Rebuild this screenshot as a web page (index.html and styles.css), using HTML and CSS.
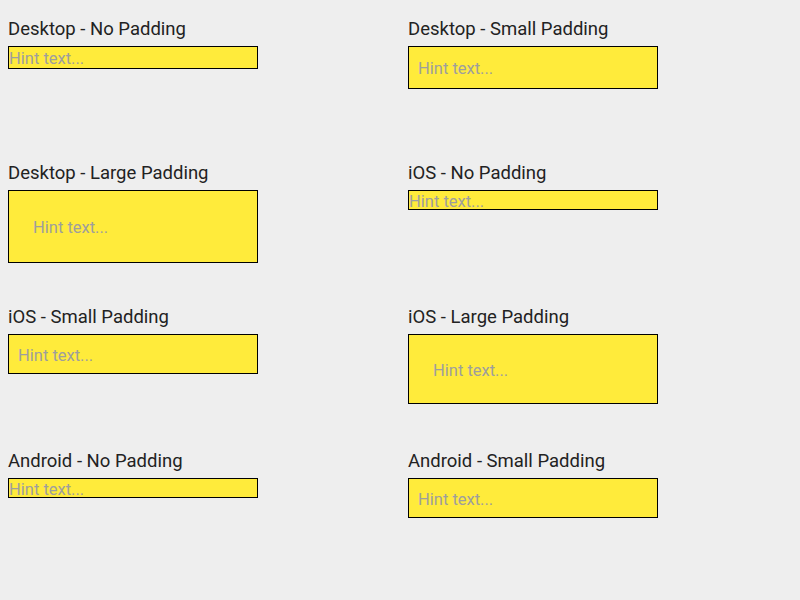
FILE: index.html
```html
<!DOCTYPE html>
<html>
<head>
<meta charset="utf-8">
<link rel="stylesheet" href="styles.css">
</head>
<body>
<div class="grid">
  <div class="cell">
    <div class="label">Desktop - No Padding</div>
    <div class="field desktop"><span class="hint">Hint text...</span></div>
  </div>
  <div class="cell">
    <div class="label">Desktop - Small Padding</div>
    <div class="field desktop pad-s"><span class="hint">Hint text...</span></div>
  </div>
  <div class="cell">
    <div class="label">Desktop - Large Padding</div>
    <div class="field desktop pad-l"><span class="hint">Hint text...</span></div>
  </div>
  <div class="cell">
    <div class="label">iOS - No Padding</div>
    <div class="field mobile"><span class="hint">Hint text...</span></div>
  </div>
  <div class="cell">
    <div class="label">iOS - Small Padding</div>
    <div class="field mobile pad-s"><span class="hint">Hint text...</span></div>
  </div>
  <div class="cell">
    <div class="label">iOS - Large Padding</div>
    <div class="field mobile pad-l"><span class="hint">Hint text...</span></div>
  </div>
  <div class="cell">
    <div class="label">Android - No Padding</div>
    <div class="field mobile"><span class="hint">Hint text...</span></div>
  </div>
  <div class="cell">
    <div class="label">Android - Small Padding</div>
    <div class="field mobile pad-s"><span class="hint">Hint text...</span></div>
  </div>
</div>
</body>
</html>
```
FILE: styles.css
```css
html, body {
  margin: 0;
  padding: 0;
  background: #eeeeee;
  font-family: Roboto, "Liberation Sans", sans-serif;
}
.grid {
  display: grid;
  grid-template-columns: 400px 392px;
  grid-auto-rows: 144px;
  padding: 18px 0 0 8px;
}
.cell {
  display: flex;
  flex-direction: column;
  align-items: flex-start;
}
.label {
  font-size: 18.5px;
  line-height: 22px;
  color: #222222;
  margin-bottom: 6px;
  white-space: nowrap;
}
.field {
  box-sizing: border-box;
  width: 250px;
  background: #ffeb3b;
  border: 1px solid #000000;
  font-size: 16.5px;
  color: #9e9e9e;
  white-space: nowrap;
}
.hint {
  display: block;
}
.desktop .hint {
  padding-top: 2px;
  line-height: 19px;
}
.mobile .hint {
  padding-top: 3px;
  line-height: 15px;
}
.pad-s {
  padding: 10px 9px;
}
.pad-l {
  padding: 25px 24px;
}
```
